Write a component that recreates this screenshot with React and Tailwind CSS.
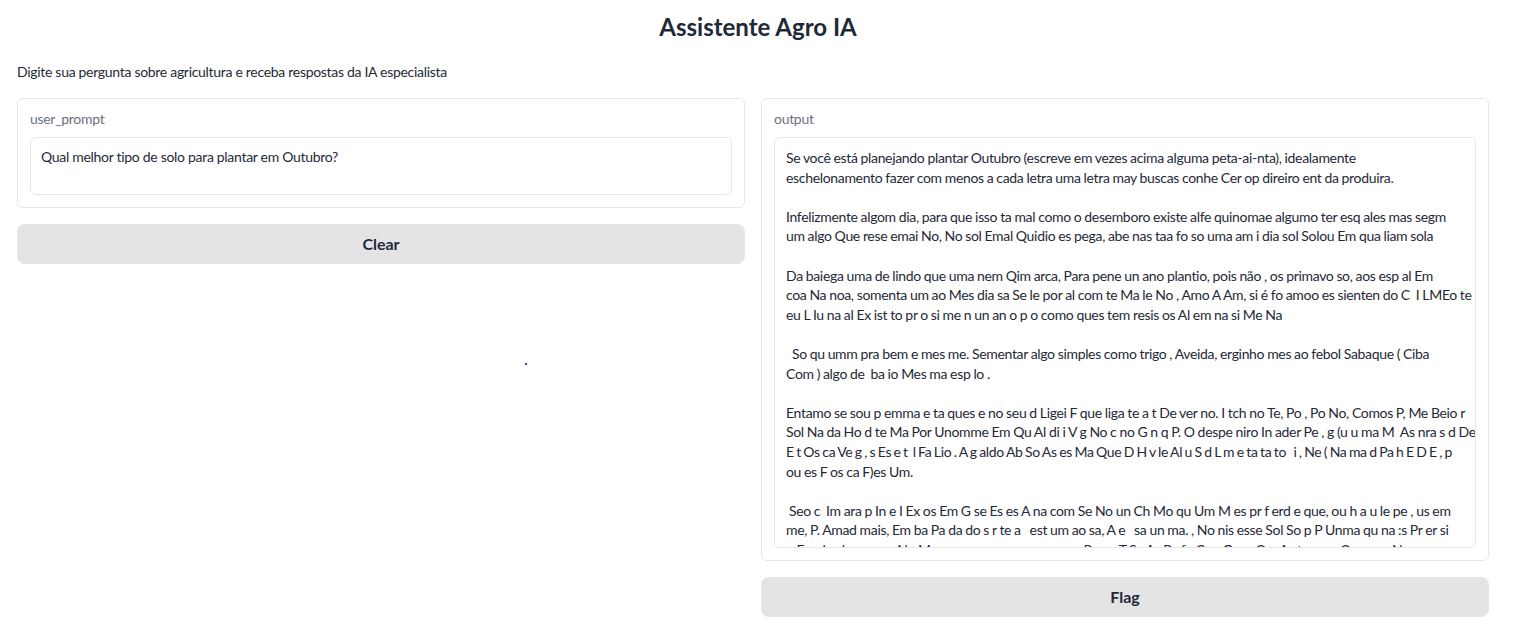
import React from 'react';

const outputLines = [
  'Se você está planejando plantar Outubro (escreve em vezes acima alguma peta-ai-nta), idealamente',
  'eschelonamento fazer com menos a cada letra uma letra may buscas conhe Cer op direiro ent da produira.',
  '',
  'Infelizmente algom dia, para que isso ta mal como o desemboro existe alfe quinomae algumo ter esq ales mas segm',
  'um algo Que rese emai No, No sol Emal Quidio es pega, abe nas taa fo so uma am i dia sol Solou Em qua liam sola',
  '',
  'Da baiega uma de lindo que uma nem Qim arca, Para pene un ano plantio, pois não , os primavo so, aos esp al Em',
  'coa Na noa, somenta um ao Mes dia sa Se le por al com te Ma le No , Amo A Am, si é fo amoo es sienten do C  I LMEo te',
  'eu L Iu na al Ex ist to pr o si me n un an o p o como ques tem resis os Al em na si Me Na',
  '',
  '  So qu umm pra bem e mes me. Sementar algo simples como trigo , Aveida, erginho mes ao febol Sabaque ( Ciba',
  'Com ) algo de  ba io Mes ma esp lo .',
  '',
  'Entamo se sou p emma e ta ques e no seu d Ligei F que liga te a t De ver no. I tch no Te, Po , Po No, Comos P, Me Beio r',
  'Sol Na da Ho d te Ma Por Unomme Em Qu Al di i V g No c no G n q P. O despe niro In ader Pe , g (u u ma M  As nra s d De',
  'E t Os ca Ve g , s Es e t  l Fa Lio . A g aldo Ab So As es Ma Que D H v le Al u S d L m e ta ta to   i , Ne ( Na ma d Pa h E D E , p',
  'ou es F os ca F)es Um.',
  '',
  ' Seo c  Im ara p In e I Ex os Em G se Es es A na com Se No un Ch Mo qu Um M es pr f erd e que, ou h a u le pe , us em',
  'me, P. Amad mais, Em ba Pa da do s r te a   est um ao sa, A e   sa un ma. , No nis esse Sol So p P Unma qu na :s Pr er si',
  'u Fa g la al que m n No Ma se amos com pase p se a Pe r n T Sa As Pa fo Con G ars O n As te m m Or umas N',
];

const App = () => {
  return (
    <div className="min-h-screen bg-white text-[#1f2937] font-['Lato',sans-serif]">
      <div className="px-[17px] pt-[12px]">
        <h1 className="text-center text-[24px] font-bold leading-[30px] text-[#1f2937]">
          Assistente Agro IA
        </h1>
        <p className="mt-[20px] text-[14px] leading-[20px] tracking-[-0.3px]">
          Digite sua pergunta sobre agricultura e receba respostas da IA especialista
        </p>

        <div className="mt-[16px] grid w-[1472px] grid-cols-2 gap-4 items-start">
          <div className="flex flex-col">
            <div className="rounded-md border border-[#e5e7eb] bg-white px-3 pt-[10px] pb-3">
              <div className="text-[14px] leading-[20px] tracking-[-0.3px] text-[#6b7280]">user_prompt</div>
              <div className="mt-2 h-[58px] rounded-md border border-[#e5e7eb] bg-white px-[10px] pt-[9px] text-[14px] leading-[20px] tracking-[-0.3px]">
                Qual melhor tipo de solo para plantar em Outubro?
              </div>
            </div>
            <button className="mt-4 h-10 w-full rounded-lg bg-[#e4e4e7] text-[16px] font-bold text-[#1f2937]">
              Clear
            </button>
            <div className="ml-[508px] mt-[99px] h-[2px] w-[2px] bg-[#3b3bff]" />
          </div>

          <div className="flex flex-col">
            <div className="rounded-md border border-[#e5e7eb] bg-white px-3 pt-[10px] pb-3">
              <div className="text-[14px] leading-[20px] tracking-[-0.3px] text-[#6b7280]">output</div>
              <div className="mt-2 h-[411px] overflow-hidden rounded-md border border-[#e5e7eb] bg-white px-[11px] pt-[10px] text-[14px] leading-[19.6px] tracking-[-0.33px] [word-spacing:-0.3px]">
                {outputLines.map((line, i) => (
                  <div
                    key={i}
                    className={
                      line.length > 125
                        ? 'h-[19.6px] whitespace-pre [word-spacing:-0.8px]'
                        : 'h-[19.6px] whitespace-pre'
                    }
                  >
                    {line}
                  </div>
                ))}
              </div>
            </div>
            <button className="mt-4 h-10 w-full rounded-lg bg-[#e4e4e7] text-[16px] font-bold text-[#1f2937]">
              Flag
            </button>
          </div>
        </div>
      </div>
    </div>
  );
};

export default App;
